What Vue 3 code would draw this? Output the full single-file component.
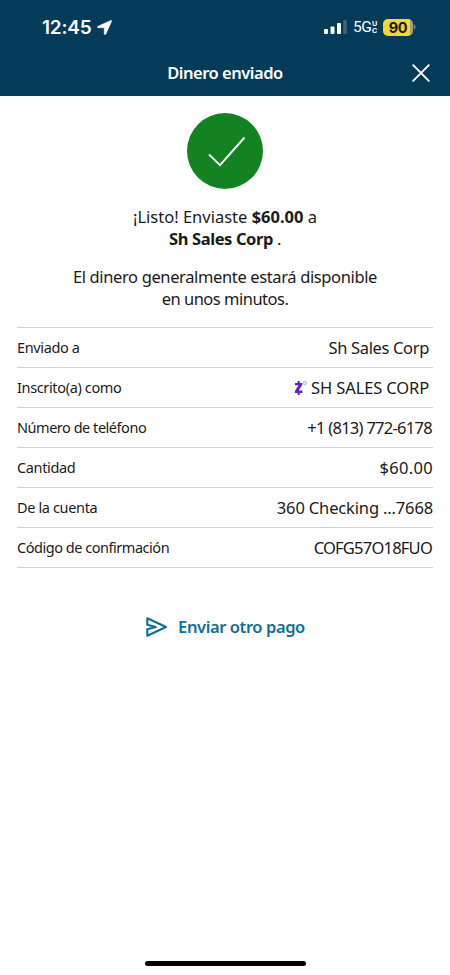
<script setup>
const rows = [
  { label: 'Enviado a', value: 'Sh Sales Corp', kind: 'recipient' },
  { label: 'Inscrito(a) como', value: 'SH SALES CORP', kind: 'enrolled', zelle: true },
  { label: 'Número de teléfono', value: '+1 (813) 772-6178', kind: 'phone' },
  { label: 'Cantidad', value: '$60.00', kind: 'amount' },
  { label: 'De la cuenta', value: '360 Checking ...7668', kind: 'account' },
  { label: 'Código de confirmación', value: 'COFG57O18FUO', kind: 'code' }
]
</script>

<template>
  <div class="screen">
    <header class="top">
      <div class="status">
        <span class="time">12:45</span>
        <svg class="arrow" width="15" height="15" viewBox="0 0 15 15"><path d="M13.8.5C14.5.2 14.9.6 14.6 1.3L8.9 14C8.4 14.9 7.2 14.7 7.2 13.7V8.3Q7.2 7.8 6.7 7.8H1.3C.2 7.8.1 6.6 1 6.2Z" fill="#fff" stroke="#fff" stroke-width=".5" /></svg>
        <svg class="signal" width="23" height="15" viewBox="0 0 23 15">
          <rect x="0" y="9" width="4" height="5" rx="1" fill="#fff" />
          <rect x="6.5" y="6.5" width="4" height="7.5" rx="1" fill="#fff" />
          <rect x="13" y="3" width="4" height="11" rx="1" fill="#fff" />
          <rect x="19.2" y="0" width="3.6" height="14" rx="1" fill="#3c657c" />
        </svg>
        <span class="net">5G</span>
        <span class="uc"><span>U</span><span>C</span></span>
        <span class="battery"><span class="level">90</span></span>
        <svg class="cap" width="3" height="6" viewBox="0 0 3 6"><path d="M.7 0Q2.6 1 2.6 3T.7 6Z" fill="#6f8b96" /></svg>
      </div>
      <div class="nav">
        <h1>Dinero enviado</h1>
        <svg class="close" width="18" height="18" viewBox="0 0 18 18"><path d="M1.2 1.2 16.8 16.8M16.8 1.2 1.2 16.8" stroke="#fff" stroke-width="1.9" stroke-linecap="round" /></svg>
      </div>
    </header>

    <main>
      <svg class="check" width="76" height="76" viewBox="0 0 76 76">
        <circle cx="38" cy="38" r="38" fill="#138321" />
        <path d="M22 41.5 33 52.2 57.5 24.5" fill="none" stroke="#fff" stroke-width="1.9" />
      </svg>
      <p class="message">
        <span class="sent">¡Listo! Enviaste <b>$60.00</b> a</span><br>
        <span class="payee"><b>Sh Sales Corp</b> .</span>
      </p>
      <p class="message note">
        <span class="availability">El dinero generalmente estará disponible</span><br>
        <span class="delay">en unos minutos.</span>
      </p>
      <dl class="details">
        <div v-for="row in rows" :key="row.label" class="row" :class="row.kind">
          <dt>{{ row.label }}</dt>
          <dd>
            <svg v-if="row.zelle" class="zelle" width="13" height="16" viewBox="0 0 13 16">
              <path d="M1 3H8.2V5L4.7 10.6H8.4V12.9H.9V11L4.5 5.3H1ZM3.6 1H5.7V4H3.6ZM3.6 12H5.7V15H3.6Z" fill="#6421b5" />
              <circle cx="10.8" cy="3" r="1.7" fill="none" stroke="#b49bd6" stroke-width=".8" />
              <circle cx="10.8" cy="3" r=".6" fill="#b49bd6" />
            </svg>
            <span>{{ row.value }}</span>
          </dd>
        </div>
      </dl>
      <button class="again" type="button">
        <svg width="22" height="20" viewBox="0 0 22 20"><path d="M1.3 1.3 20 10 1.3 18.7V12.3L9.8 10 1.3 7.7Z" fill="none" stroke="#0f6f9b" stroke-width="2.1" stroke-linejoin="round" /></svg>
        <span>Enviar otro pago</span>
      </button>
    </main>
    <div class="home"></div>
  </div>
</template>

<style>
body { background: #fff; }
</style>

<style scoped>
.screen { width: 450px; height: 975px; display: flex; flex-direction: column; align-items: center; font-family: "Noto Sans", sans-serif; color: #1b1b1b; overflow: hidden; background: #fff; }
.top { width: 450px; height: 96px; background: #033b59; color: #fff; flex: none; }
.status { height: 54px; display: flex; align-items: center; padding-left: 42px; font-family: Inter, sans-serif; white-space: nowrap; }
.time { font-size: 19px; font-weight: 600; width: 55px; letter-spacing: -.2px; }
.signal { margin-left: 212px; }
.net { font: 400 15.5px Roboto, sans-serif; margin-left: 6px; width: 19px; letter-spacing: -.5px; }
.uc { display: flex; flex-direction: column; width: 6px; font: 600 8px/7px Roboto, sans-serif; }
.battery { margin-left: 5px; width: 30px; height: 17px; border-radius: 5px; background: linear-gradient(90deg, #f6d72e 0 27px, #a7a56a 27px); }
.level { display: block; width: 30px; text-align: center; color: #161500; font-size: 14.5px; line-height: 17px; font-weight: 700; letter-spacing: -.3px; }
.nav { height: 42px; display: grid; grid-template-columns: 42px 1fr 42px; align-items: center; }
h1 { grid-column: 2; margin: 0; padding-bottom: 4px; height: 34px; line-height: 34px; text-align: center; font-size: 16.5px; font-weight: 600; letter-spacing: -.48px; }
.close { margin-left: 4px; margin-bottom: 5px; }
main { width: 416px; display: flex; flex-direction: column; align-items: center; padding-top: 17px; }
.message { margin: 17px 0 0; line-height: 22px; font-size: 16.5px; text-align: center; white-space: nowrap; }
.payee { letter-spacing: -.4px; }
.note { margin-top: 16px; }
.availability { letter-spacing: -.37px; }
.delay { letter-spacing: -.5px; }
.details { width: 416px; margin: 17px 0 0; border-top: 1px solid #d2d2d2; }
.row { height: 39px; border-bottom: 1px solid #d2d2d2; display: flex; justify-content: space-between; align-items: center; white-space: nowrap; }
dt { padding-bottom: 2px; font-size: 14.5px; letter-spacing: -.36px; }
dd { margin: 0; font-size: 16.5px; display: flex; align-items: center; }
.recipient dd, .enrolled dd { padding-right: 4px; }
.recipient dd { letter-spacing: -.35px; }
.enrolled dd { letter-spacing: -.13px; }
.phone dt, .code dt { letter-spacing: -.47px; }
.phone dd { letter-spacing: -.72px; }
.amount dd { letter-spacing: .3px; }
.account dd { letter-spacing: -.15px; }
.code dd { letter-spacing: -.78px; }
.phone dd, .code dd { padding-right: 1px; }
.zelle { margin-right: 4px; }
.again { margin-top: 46px; border: 0; padding: 0; background: none; display: flex; align-items: center; gap: 10px; color: #0f6f9b; font: 600 16.5px "Noto Sans", sans-serif; letter-spacing: -.4px; height: 26px; padding-left: 1px; }
.again span { padding-bottom: 2px; }
.home { width: 161px; height: 5px; border-radius: 3px; background: #000; margin-top: auto; margin-bottom: 9px; flex: none; }
</style>
